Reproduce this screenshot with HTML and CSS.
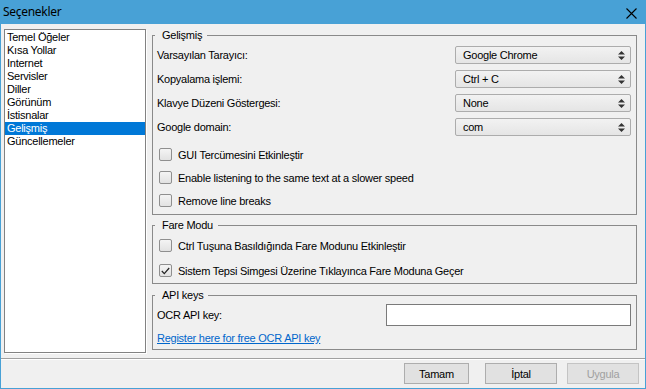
FILE: index.html
```html
<!DOCTYPE html>
<html lang="tr">
<head>
    <meta charset="UTF-8">
    <title>Seçenekler</title>
    <link rel="stylesheet" href="styles.css">
</head>
<body>
    <div class="window">
        <!-- başlık çubuğu -->
        <div class="titlebar">
            <span class="title">Seçenekler</span>
            <span class="close">
                <svg width="11" height="11" viewBox="0 0 11 11"><path d="M0.5 0.5 L10.5 10.5 M10.5 0.5 L0.5 10.5" stroke="#000" stroke-width="1.1" fill="none"/></svg>
            </span>
        </div>

        <div class="main">
            <!-- sol menü -->
            <ul class="nav">
                <li>Temel Öğeler</li>
                <li>Kısa Yollar</li>
                <li>Internet</li>
                <li>Servisler</li>
                <li>Diller</li>
                <li>Görünüm</li>
                <li>İstisnalar</li>
                <li class="selected">Gelişmiş</li>
                <li>Güncellemeler</li>
            </ul>

            <div class="panel">
                <!-- Gelişmiş -->
                <fieldset class="group group-advanced">
                    <legend>Gelişmiş</legend>
                    <div class="fields">
                        <div class="field">
                            <span class="label">Varsayılan Tarayıcı:</span>
                            <div class="combo"><span>Google Chrome</span><svg class="arrows" width="7" height="9" viewBox="0 0 7 9"><path d="M3.5 0 L7 3.5 L0 3.5 Z M0 5.5 L7 5.5 L3.5 9 Z" fill="#333"/></svg></div>
                        </div>
                        <div class="field">
                            <span class="label">Kopyalama işlemi:</span>
                            <div class="combo"><span>Ctrl + C</span><svg class="arrows" width="7" height="9" viewBox="0 0 7 9"><path d="M3.5 0 L7 3.5 L0 3.5 Z M0 5.5 L7 5.5 L3.5 9 Z" fill="#333"/></svg></div>
                        </div>
                        <div class="field">
                            <span class="label">Klavye Düzeni Göstergesi:</span>
                            <div class="combo"><span>None</span><svg class="arrows" width="7" height="9" viewBox="0 0 7 9"><path d="M3.5 0 L7 3.5 L0 3.5 Z M0 5.5 L7 5.5 L3.5 9 Z" fill="#333"/></svg></div>
                        </div>
                        <div class="field">
                            <span class="label">Google domain:</span>
                            <div class="combo"><span>com</span><svg class="arrows" width="7" height="9" viewBox="0 0 7 9"><path d="M3.5 0 L7 3.5 L0 3.5 Z M0 5.5 L7 5.5 L3.5 9 Z" fill="#333"/></svg></div>
                        </div>
                    </div>
                    <div class="checks">
                        <div class="check"><span class="box"></span>GUI Tercümesini Etkinleştir</div>
                        <div class="check"><span class="box"></span>Enable listening to the same text at a slower speed</div>
                        <div class="check"><span class="box"></span>Remove line breaks</div>
                    </div>
                </fieldset>

                <!-- Fare Modu -->
                <fieldset class="group group-mouse">
                    <legend>Fare Modu</legend>
                    <div class="checks checks-wide">
                        <div class="check"><span class="box"></span>Ctrl Tuşuna Basıldığında Fare Modunu Etkinleştir</div>
                        <div class="check"><span class="box"><svg width="9" height="8" viewBox="0 0 9 8"><path d="M0.8 4 L3.3 6.6 L8.2 1" stroke="#222" stroke-width="1.2" fill="none"/></svg></span>Sistem Tepsi Simgesi Üzerine Tıklayınca Fare Moduna Geçer</div>
                    </div>
                </fieldset>

                <!-- API keys -->
                <fieldset class="group group-api">
                    <legend>API keys</legend>
                    <div class="api-row">
                        <span class="label">OCR API key:</span>
                        <div class="textbox"></div>
                    </div>
                    <a class="link" href="#">Register here for free OCR API key</a>
                </fieldset>
            </div>
        </div>

        <div class="footer">
            <button class="btn btn-ok">Tamam</button>
            <button class="btn btn-cancel">İptal</button>
            <button class="btn btn-apply" disabled>Uygula</button>
        </div>
    </div>
</body>
</html>
```

FILE: styles.css
```css
/* genel */
body {
    margin: 0;
    font-family: 'Liberation Sans', Arial, sans-serif;
    font-size: 11px;
    letter-spacing: -0.25px;
    color: #000;
    background: #fff;
}

.window {
    width: 646px;
    height: 389px;
    box-sizing: border-box;
    border: 1px solid #48a1d6;
    border-top: none;
    background-color: #f0f0f0;
    display: flex;
    flex-direction: column;
}

/* başlık çubuğu */
.titlebar {
    height: 24px;
    background-color: #48a1d6;
    display: flex;
    align-items: center;
    justify-content: space-between;
    padding: 0 9px 0 3px;
    margin: 0 -1px;
}
.title {
    font-family: 'Noto Sans', 'Open Sans', sans-serif;
    font-size: 12px;
    letter-spacing: -0.3px;
    color: #000;
    margin-top: -1px;
}
.close {
    display: flex;
    margin-top: 2px;
}

/* ana alan */
.main {
    height: 334px;
    display: flex;
    gap: 6px;
    padding: 5px 8px 0 3px;
    box-sizing: border-box;
}

/* sol liste */
.nav {
    list-style: none;
    margin: 0;
    padding: 1px 0 0 0;
    width: 142px;
    height: 324px;
    box-sizing: border-box;
    background: #fff;
    border: 1px solid #828282;
    box-shadow: 1px 1px 0 #fff;
}
.nav li {
    height: 13px;
    line-height: 13px;
    padding-left: 2px;
    white-space: nowrap;
}
.nav li.selected {
    background-color: #0078d7;
    color: #fff;
}

/* sağ panel */
.panel {
    flex: 1;
    display: flex;
    flex-direction: column;
}

.group {
    margin: 0;
    min-width: 0;
    border: 1px solid #8a8a8a;
    padding: 0 5px 0 4px;
}
.group legend {
    height: 13px;
    line-height: 13px;
    padding: 0 5px 0 7px;
    margin-left: -2px;
}

.group-advanced {
    padding-top: 4px;
    padding-bottom: 5px;
}
.group-mouse {
    margin-top: 4px;
    padding-top: 5px;
    padding-bottom: 4px;
}
.group-api {
    margin-top: 5px;
    padding-top: 2px;
    padding-bottom: 3px;
}

/* etiket + açılır kutu satırları */
.fields {
    display: flex;
    flex-direction: column;
    gap: 6px;
}
.field {
    display: flex;
    justify-content: space-between;
    align-items: center;
    height: 18px;
}
.combo {
    width: 176px;
    height: 18px;
    box-sizing: border-box;
    border: 1px solid #acacac;
    border-radius: 2px;
    background: linear-gradient(#f2f2f2, #e5e5e5);
    display: flex;
    align-items: center;
    justify-content: space-between;
    padding: 0 5px 0 7px;
}
.arrows {
    display: block;
}

/* onay kutuları */
.checks {
    margin-top: 10px;
    display: flex;
    flex-direction: column;
    gap: 6px;
}
.checks-wide {
    margin-top: 0;
    gap: 8px;
}
.check {
    height: 17px;
    display: flex;
    align-items: center;
    padding-left: 2px;
}
.box {
    width: 13px;
    height: 13px;
    box-sizing: border-box;
    border: 1px solid #8f8f8f;
    border-radius: 2px;
    background: linear-gradient(#f4f4f4, #e2e2e2);
    margin-right: 6px;
    display: flex;
    align-items: center;
    justify-content: center;
}

/* API */
.api-row {
    display: flex;
    justify-content: space-between;
    align-items: center;
    height: 22px;
}
.textbox {
    width: 245px;
    height: 22px;
    box-sizing: border-box;
    background: #fff;
    border: 1px solid #7a7a7a;
}
.link {
    display: block;
    margin-top: 4px;
    height: 16px;
    line-height: 16px;
    color: #0066cc;
    text-decoration: underline;
    width: max-content;
}

/* alt butonlar */
.footer {
    flex: 1;
    border-top: 1px solid #a0a0a0;
    box-shadow: inset 0 1px 0 #fff;
    display: flex;
    justify-content: flex-end;
    align-items: flex-start;
    padding: 4px 6px 0 0;
}
.btn {
    height: 21px;
    font-family: 'Liberation Sans', Arial, sans-serif;
    font-size: 11px;
    letter-spacing: -0.25px;
    color: #000;
    background-color: #e1e1e1;
    border: 1px solid #adadad;
    padding: 0;
}
.btn-ok {
    width: 65px;
}
.btn-cancel {
    width: 72px;
    margin-left: 16px;
}
.btn-apply {
    width: 72px;
    margin-left: 10px;
    color: #a0a0a0;
    border-color: #c4c4c4;
}
```
